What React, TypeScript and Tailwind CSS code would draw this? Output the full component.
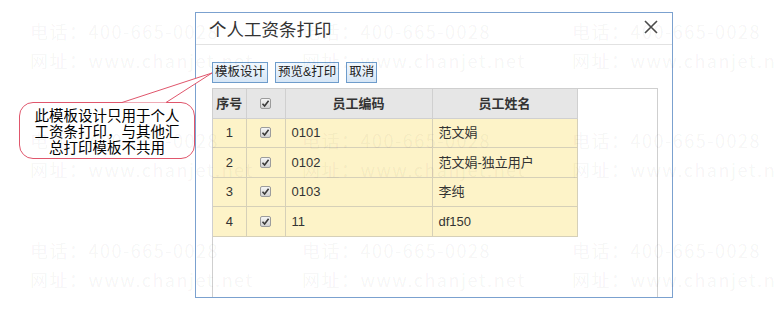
import React from "react";

const FONT = { fontFamily: '"Liberation Sans", "Noto Sans CJK SC", sans-serif' };
const CJK = { fontFamily: '"Noto Sans CJK SC", "Liberation Sans", sans-serif' };

const rows = [
  { no: 1, code: "0101", name: "范文娟" },
  { no: 2, code: "0102", name: "范文娟-独立用户" },
  { no: 3, code: "0103", name: "李纯" },
  { no: 4, code: "11", name: "df150" },
];

const wmCols = [30, 302, 572];
const wmRows = [20, 129, 239];

function CheckBox() {
  return (
    <span className="inline-flex h-[11px] w-[11px] items-center justify-center rounded-[2px] border border-[#9c9c9c] bg-gradient-to-b from-[#f6f6f6] to-[#d2d2d2]">
      <svg width="9" height="9" viewBox="0 0 9 9">
        <path d="M1.5 4.8 L3.6 7 L7.6 1.8" fill="none" stroke="#3a3a3a" strokeWidth="1.6" />
      </svg>
    </span>
  );
}

function Btn({ children }: { children: React.ReactNode }) {
  return (
    <button
      className="h-[21px] border border-[#6e9ccb] bg-gradient-to-b from-[#f2f8fe] to-[#d6e6f6] px-[2px] text-[12.5px] leading-none text-[#222]"
      style={FONT}
    >
      {children}
    </button>
  );
}

export default function App() {
  return (
    <div className="relative h-[330px] w-[775px] overflow-hidden bg-white" style={CJK}>
      {/* dialog */}
      <div className="ml-[195px] mt-[12px] flex h-[286px] w-[478px] flex-col border border-[#7ba1cf] bg-white">
        <div className="flex h-[32px] shrink-0 items-center justify-between border-b border-[#e2e2e2] pl-[13px] pr-[14px]">
          <span className="pt-[1px] text-[17.5px] text-[#333]">个人工资条打印</span>
          <svg width="14" height="14" viewBox="0 0 14 14" className="-mt-[4px]">
            <path d="M1 1 L13 13 M13 1 L1 13" stroke="#4a4a4a" strokeWidth="1.6" />
          </svg>
        </div>

        <div className="flex gap-[7px] pl-[16px] pt-[17px]">
          <Btn>模板设计</Btn>
          <Btn>预览&amp;打印</Btn>
          <Btn>取消</Btn>
        </div>

        <div className="ml-[16px] mr-[14px] mt-[5px] flex-1 border-l border-r border-t border-[#cfcfcf]">
          <table className="table-fixed border-collapse text-[13px] text-[#333]" style={FONT}>
            <thead>
              <tr className="h-[29px] bg-[#e6e6e6]">
                <th className="w-[33px] border-b border-r border-[#d0d0d0] font-bold">序号</th>
                <th className="w-[39px] border-b border-r border-[#d0d0d0]">
                  <div className="flex justify-center">
                    <CheckBox />
                  </div>
                </th>
                <th className="w-[147px] border-b border-r border-[#d0d0d0] font-bold">员工编码</th>
                <th className="w-[145px] border-b border-r border-[#d0d0d0] font-bold">员工姓名</th>
              </tr>
            </thead>
            <tbody>
              {rows.map((r) => (
                <tr key={r.no} className="h-[29.5px] bg-[#fdf3c8]">
                  <td className="border-b border-r border-[#d6d0b8] text-center">{r.no}</td>
                  <td className="border-b border-r border-[#d6d0b8]">
                    <div className="flex justify-center">
                      <CheckBox />
                    </div>
                  </td>
                  <td className="border-b border-r border-[#d6d0b8] pl-[6px]">{r.code}</td>
                  <td className="border-b border-r border-[#d6d0b8] pl-[6px]">{r.name}</td>
                </tr>
              ))}
            </tbody>
          </table>
        </div>
      </div>

      {/* callout annotation */}
      <div className="absolute left-[19px] top-[102px] flex h-[57px] w-[176px] flex-col items-center justify-center rounded-[14px] border border-[#e0566c] bg-white text-[14.5px] leading-[16px] text-black">
        <span>此模板设计只用于个人</span>
        <span>工资条打印，与其他汇</span>
        <span>总打印模板不共用</span>
      </div>
      <svg className="absolute left-0 top-0" width="775" height="330">
        <polygon points="122,102.5 212,73 166,102.5" fill="#fff" stroke="none" />
        <path d="M122 102.5 L212 73 L166 102.5" fill="none" stroke="#e0566c" strokeWidth="1" />
      </svg>

      {/* watermark */}
      <div className="pointer-events-none absolute inset-0">
        {wmRows.map((y) =>
          wmCols.map((x) => (
            <div
              key={`${x}-${y}`}
              className="absolute whitespace-nowrap text-[18px] leading-[22px] tracking-[1.5px] text-black/[0.05]"
              style={{ left: x, top: y }}
            >
              <div>电话：400-665-0028</div>
              <div className="mt-[7px]">网址：www.chanjet.net</div>
            </div>
          ))
        )}
      </div>
    </div>
  );
}
